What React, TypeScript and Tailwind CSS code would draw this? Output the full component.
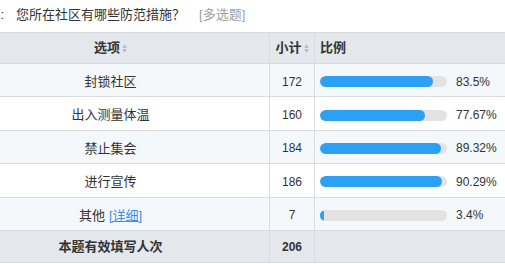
import React from 'react';

const rows = [
  { label: '封锁社区', count: 172, pct: '83.5%', fill: 113 },
  { label: '出入测量体温', count: 160, pct: '77.67%', fill: 105 },
  { label: '禁止集会', count: 184, pct: '89.32%', fill: 121 },
  { label: '进行宣传', count: 186, pct: '90.29%', fill: 122 },
  { label: '其他', count: 7, pct: '3.4%', fill: 4, detail: true },
];

const SortIcon: React.FC = () => (
  <svg width="5" height="9" viewBox="0 0 5 9" className="ml-[2px] inline-block">
    <path d="M2.5 0.5 L4.8 3.8 L0.2 3.8 Z" fill="#b4b4b4" />
    <path d="M2.5 8.5 L4.8 5.2 L0.2 5.2 Z" fill="#b4b4b4" />
  </svg>
);

const App: React.FC = () => {
  return (
    <div
      className="w-[505px] h-[264px] overflow-hidden bg-white text-[#333] text-[13px]"
      style={{ fontFamily: '"Liberation Sans", "Noto Sans CJK SC", sans-serif' }}
    >
      <div className="-ml-[48px] w-[620px]">
        {/* question title */}
        <div className="flex items-center h-[32px] pb-[2px]">
          <span className="w-[52px] text-right whitespace-nowrap">第7题:</span>
          <span className="ml-[12px]">您所在社区有哪些防范措施？</span>
          <span className="ml-[14px] text-[#a0a0a0]">[多选题]</span>
        </div>

        {/* table */}
        <div className="border-t border-[#dadbdd]">
          <div className="grid grid-cols-[318px_45px_1fr] h-[31px] bg-[#e4e7eb] border-b border-[#dadbdd] font-bold">
            <div className="flex items-center justify-center border-r border-[#dadbdd]">
              选项<SortIcon />
            </div>
            <div className="flex items-center justify-center border-r border-[#dadbdd]">
              小计<SortIcon />
            </div>
            <div className="flex items-center pl-[5px]">比例</div>
          </div>

          {rows.map((r, i) => (
            <div
              key={r.label}
              className={`grid grid-cols-[318px_45px_1fr] h-[33.4px] border-b border-[#dadbdd] ${
                i % 2 === 0 ? 'bg-[#f5f8fb]' : 'bg-white'
              }`}
            >
              <div className="flex items-center justify-center border-r border-[#dadbdd] pt-[3px]">
                {r.label}
                {r.detail && (
                  <span className="ml-[4px] text-[#3b8fe6] underline">[详细]</span>
                )}
              </div>
              <div className="flex items-center justify-center border-r border-[#dadbdd] text-[12px] pt-[3px]">
                {r.count}
              </div>
              <div className="flex items-center pl-[5px] pt-[3px]">
                <div className="w-[127px] h-[11px] rounded-full bg-[#e3e3e3] overflow-hidden">
                  <div className="h-full rounded-full bg-[#2ca0f5]" style={{ width: `${r.fill}px` }} />
                </div>
                <span className="ml-[9px] text-[12px]">{r.pct}</span>
              </div>
            </div>
          ))}

          <div className="grid grid-cols-[318px_45px_1fr] h-[32px] bg-[#e4e7eb] border-b border-[#dadbdd] font-bold">
            <div className="flex items-center justify-center border-r border-[#dadbdd] pt-[1px]">
              本题有效填写人次
            </div>
            <div className="flex items-center justify-center border-r border-[#dadbdd] text-[12px] pt-[1px]">
              206
            </div>
            <div />
          </div>
        </div>
      </div>
    </div>
  );
};

export default App;
